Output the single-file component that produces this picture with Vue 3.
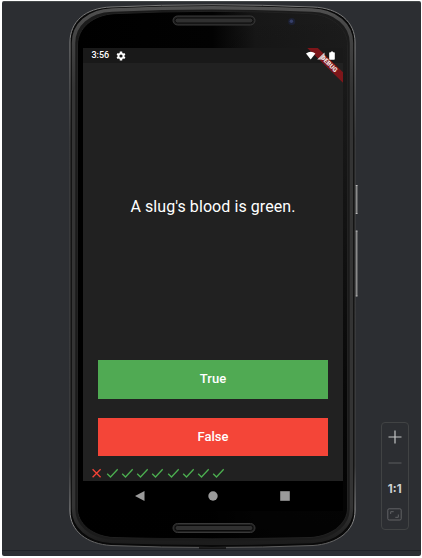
<script setup>
import { ref } from 'vue'

const question = ref("A slug's blood is green.")
const scores = ref([false, true, true, true, true, true, true, true, true])
</script>

<template>
  <main class="emulator">
    <section class="phone">
      <svg class="shell" viewBox="0 0 294 558" aria-hidden="true">
        <defs>
          <linearGradient id="glass" x1="0" x2="1" y1="0" y2="0">
            <stop offset="0" stop-color="#000" />
            <stop offset=".5" stop-color="#020202" />
            <stop offset=".66" stop-color="#171717" />
            <stop offset="1" stop-color="#1c1c1c" />
          </linearGradient>
          <linearGradient id="fade" x1="0" x2="0" y1="0" y2="1">
            <stop offset="0" stop-color="#000" stop-opacity="0" />
            <stop offset=".25" stop-color="#000" stop-opacity=".2" />
            <stop offset=".8" stop-color="#000" stop-opacity=".8" />
            <stop offset="1" stop-color="#000" stop-opacity=".9" />
          </linearGradient>
          <linearGradient id="rim" x1="0" x2="0" y1="0" y2="1">
            <stop offset="0" stop-color="#777" />
            <stop offset=".08" stop-color="#858585" />
            <stop offset=".25" stop-color="#454545" />
            <stop offset=".85" stop-color="#484848" />
            <stop offset=".93" stop-color="#999" />
            <stop offset="1" stop-color="#5c5c5c" />
          </linearGradient>
          <linearGradient id="band" x1="0" x2="0" y1="0" y2="1">
            <stop offset="0" stop-color="#505050" />
            <stop offset=".04" stop-color="#464646" />
            <stop offset=".15" stop-color="#343434" />
            <stop offset=".93" stop-color="#343434" />
            <stop offset="1" stop-color="#1c1c1c" />
          </linearGradient>
        </defs>
        <path d="M287.500 185.500h2v28h-2zM287.500 231h2v65h-2z" fill="#8a8a8a" />
        <path d="M287.500 185.500h2M287.500 213.500h2M287.500 231h2M287.500 296h2" stroke="#bbb" />
        <path d="M2 42C2 22 17 8 43 7Q144 2.500 245 7C271 8 287 22 287 42V511C287 531 269 544 245 545.500Q144 549.500 43 545.500C19 544 2 531 2 511Z" fill="#090909" stroke="url(#rim)" />
        <path d="M5.500 43C5.500 25 20 11 44 10Q144 5.500 244 10C268 11 283.500 25 283.500 43V509C283.500 526 268 540 244 541.500Q144 545 44 541.500C20 540 5.500 526 5.500 509Z" fill="#1b1b1b" stroke="url(#band)" stroke-width="3.500" />
        <path d="M9.500 45C9.500 28 25 15 46 13.700Q144 9 242 13.700C263 15 279.500 28 279.500 45V508C279.500 524 263 536 242 537.500Q144 540 46 537.500C25 536 9.500 524 9.500 508Z" fill="url(#glass)" stroke="#222" />
        <path d="M10 45C10 28 25 15 46 14Q144 9.500 242 14C263 15 279 28 279 45V508C279 524 263 536 242 537Q144 539.500 46 537C25 536 10 524 10 508Z" fill="url(#fade)" />
        <path d="M131 548h27" stroke="#0c0c0c" stroke-width="1.500" />
        <g fill="#202020" stroke="#383838">
          <rect x="105" y="16" width="82" height="9" rx="4.500" />
          <rect x="105" y="523.500" width="82" height="9" rx="4.500" />
        </g>
        <g fill="#303030" stroke="#0b0b0b">
          <rect x="107" y="18" width="78" height="5" rx="2.500" />
          <rect x="107" y="525.500" width="78" height="5" rx="2.500" />
        </g>
        <circle cx="223.700" cy="21.500" r="3.500" fill="#1c2033" />
        <circle cx="223.400" cy="21.300" r="1.700" fill="#36406a" />
      </svg>

      <div class="screen">
        <header class="status">
          <span class="time">3:56</span>
          <svg class="gear" viewBox="1 1 22 22">
            <path fill="#fff" fill-rule="evenodd" d="M19.400 13a7.500 7.500 0 0 0 0-2l2.300-1.700-2.300-4-2.700 1.100-1.700-1L14.600 2H9.400L9 5.400l-1.700 1-2.700-1.100-2.300 4L4.600 11v2l-2.300 1.700 2.300 4 2.700-1.100 1.700 1 .4 3.400h5.200l.4-3.400 1.700-1 2.700 1.100 2.300-4ZM12 15.500a3.500 3.500 0 1 1 0-7 3.500 3.500 0 0 1 0 7Z" />
          </svg>
          <svg class="signals" viewBox="0 0 29 10">
            <path fill="#fff" d="M0 2.500Q4.700 -.8 9.400 2.500L4.700 8.500Z" />
            <path fill="#ddd" d="M18.500 1.500V8.500H11.200Z" />
            <path fill="#fff" d="M24 1.200h1V.4h2v.8h1q.8 0 .8.800v6q0 .8-.8.800h-4q-.8 0-.8-.8V2q0-.8.800-.8Z" />
          </svg>
        </header>
        <div class="quiz">
          <div class="question">{{ question }}</div>
          <div class="answers">
            <button class="answer yes">True</button>
            <button class="answer no">False</button>
          </div>
          <div class="scores">
            <svg v-for="(right, i) in scores" :key="i" class="mark" viewBox="0 0 15.200 12">
              <path v-if="right" d="M2.200 6.800 5.500 10 12.700 2.300" stroke="#4caf50" />
              <path v-else d="m2.600 2.200 8 8m0-8-8 8" stroke="#f44336" />
            </svg>
          </div>
        </div>
        <nav class="nav">
          <svg viewBox="0 0 10 10"><path d="M9.500 0v10L0 5Z" fill="#9b9b9b" /></svg>
          <svg viewBox="0 0 10 10"><circle cx="5" cy="5" r="4.700" fill="#9b9b9b" /></svg>
          <svg viewBox="0 0 10 10"><path d="M.2.200h9.600v9.600H.2Z" fill="#9b9b9b" /></svg>
        </nav>
        <div class="ribbon"></div>
        <span class="debug">DEBUG</span>
      </div>
    </section>

    <aside class="zoom">
      <svg class="plus" viewBox="0 0 14 14"><path d="M7 .5v13M.5 7h13" stroke="#c4c5c6" stroke-width="1.200" /></svg>
      <svg class="minus" viewBox="0 0 14 4"><path d="M.5 2h13" stroke="#5b5d5f" /></svg>
      <span class="ratio">1:1</span>
      <svg class="fit" viewBox="0 0 15 13">
        <rect x=".8" y=".8" width="13.400" height="11.200" rx="1.300" fill="none" stroke="#626365" />
        <path d="M3.700 6V3.700h3M11.300 6.500v2.800h-3" fill="none" stroke="#626365" />
      </svg>
    </aside>
    <div class="edge"></div>
  </main>
</template>

<style>
body {
  background: #fff;
}
</style>

<style scoped>
.emulator {
  position: relative;
  box-sizing: border-box;
  display: flex;
  width: 419px;
  height: 555px;
  margin: 1px 0 0 1.500px;
  padding-left: 66px;
  background: #2c2e32;
  border-top: 1px solid #45494a;
  border-radius: 2px;
  overflow: hidden;
  font-family: Roboto, sans-serif;
}
.phone {
  position: relative;
  width: 294px;
  height: 554px;
  flex: none;
}
.shell {
  position: absolute;
  left: 0;
  top: -2px;
  width: 294px;
  height: 558px;
}
.screen {
  position: relative;
  display: flex;
  flex-direction: column;
  width: 260.600px;
  height: 463px;
  margin: 46px 0 0 15.200px;
  overflow: hidden;
  background: #000;
}
.status {
  box-sizing: border-box;
  display: flex;
  align-items: center;
  height: 15px;
  padding: 0 8.200px 0 8.800px;
  background: #191919;
}
.time {
  width: 24.500px;
  color: #fff;
  font-size: 9px;
  font-weight: 500;
  line-height: 15px;
}
.gear {
  width: 10px;
  height: 10px;
}
.signals {
  position: relative;
  z-index: 1;
  width: 29px;
  height: 10px;
  margin-left: auto;
}
.quiz {
  display: flex;
  flex-direction: column;
  height: 418px;
  background: #212121;
}
.question {
  display: flex;
  align-items: center;
  justify-content: center;
  height: 287px;
  color: #fff;
  font-size: 16px;
  letter-spacing: .08px;
  white-space: nowrap;
}
.answers {
  display: flex;
  flex-direction: column;
  gap: 19px;
  margin: 10px 15.700px 0;
}
.answer {
  height: 38.500px;
  padding: 0;
  border: 0;
  color: #fff;
  font: 500 13px/38px Roboto, sans-serif;
}
.yes {
  background: #50aa53;
}
.no {
  background: #f44538;
}
.scores {
  display: flex;
  margin: 11px 0 0 7px;
}
.mark {
  width: 15.200px;
  height: 12px;
  fill: none;
  stroke-width: 1.300;
}
.nav {
  display: flex;
  align-items: center;
  justify-content: center;
  gap: 62.500px;
  height: 30px;
}
.nav svg {
  width: 10px;
  height: 10px;
}
.ribbon {
  position: absolute;
  top: 0;
  right: 0;
  width: 36px;
  height: 35px;
  background: rgba(150, 20, 25, .8);
  clip-path: polygon(0 0, 10.500px 0, 100% 24.500px, 100% 100%);
}
.debug {
  position: absolute;
  z-index: 2;
  left: 231px;
  top: 10.500px;
  width: 30px;
  color: #f4e4e4;
  font-size: 6.500px;
  font-weight: 900;
  line-height: 10px;
  text-align: center;
  text-shadow: 0 0 1px #701519;
  transform: rotate(45deg);
}
.zoom {
  box-sizing: border-box;
  display: flex;
  flex-direction: column;
  align-items: center;
  width: 27.500px;
  height: 108px;
  margin: 420px 0 0 19.500px;
  padding-top: 7px;
  border: 1px solid #414344;
  border-radius: 4px;
}
.plus {
  width: 14px;
  height: 14px;
}
.minus {
  width: 14px;
  height: 4px;
  margin-top: 17px;
}
.ratio {
  margin-top: 16px;
  color: #d0d1d2;
  font: 700 11.500px/16px Inter, sans-serif;
}
.fit {
  width: 15px;
  height: 13px;
  margin-top: 11px;
}
.edge {
  position: absolute;
  left: 0;
  right: 0;
  bottom: 5px;
  height: 1px;
  background: #202226;
}
</style>
